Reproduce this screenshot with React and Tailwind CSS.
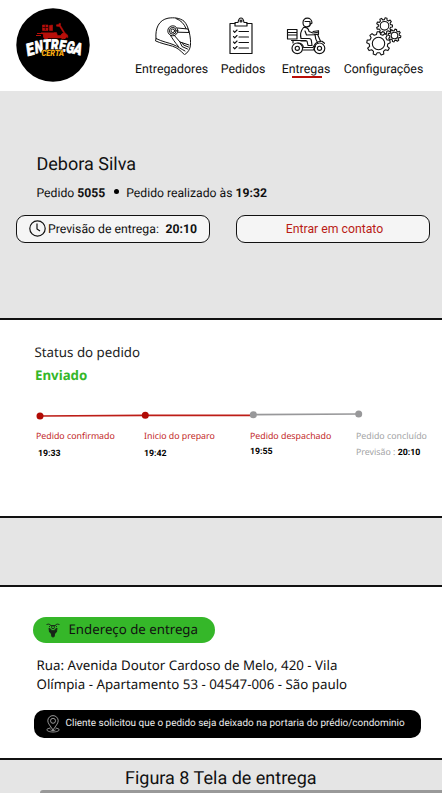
import React from 'react';

const roboto = "font-['Roboto',sans-serif]";
const noto = "font-['Noto_Sans',sans-serif]";

function Logo() {
  return (
    <svg width="76" height="76" viewBox="0 0 76 76" className="block">
      <circle cx="38" cy="38" r="36.7" fill="#000" />
      <g fill="#b80f0a" stroke="#b80f0a" strokeLinejoin="round">
        <path d="M27.500 18h5.500v5.500h-5.500z M34.500 18.500l3-.5v5.500h-3z" strokeWidth=".6" />
        <path d="M26.500 25.500h15l1 3h4l1-2h1.500l-4.500-7-3-.3v-1.500l2.500-.3v-1h1.500v2l4.500 7.500 2.500 2 .5 2.500-3-.5-3 1H31z" strokeWidth=".5" />
        <circle cx="31" cy="29.200" r="2.500" />
        <path d="M22 26.500h6M21 28.500h5" strokeWidth="1" />
        <circle cx="48.500" cy="29.200" r="2.600" />
      </g>
      <path d="M27.500 20.500h5.500M27 25h12M30.300 18v5" stroke="#260000" strokeWidth=".8" />
      <g transform="translate(1.100 .3) scale(.97 1)" fontFamily="Roboto, sans-serif" fontWeight="900" fill="#fff" stroke="#fff" strokeWidth=".7" textAnchor="middle">
        <text transform="translate(15.500 48) rotate(-14) skewX(-6)" fontSize="17" textLength="8" lengthAdjust="spacingAndGlyphs">E</text>
        <text transform="translate(24 45.500) rotate(-10) skewX(-6)" fontSize="17" textLength="8.500" lengthAdjust="spacingAndGlyphs">N</text>
        <text transform="translate(31.700 43.500) rotate(-4) skewX(-6)" fontSize="15.500" textLength="8" lengthAdjust="spacingAndGlyphs">T</text>
        <text transform="translate(39.500 43) skewX(-6)" fontSize="15" textLength="8" lengthAdjust="spacingAndGlyphs">R</text>
        <text transform="translate(47 44) rotate(5) skewX(-6)" fontSize="15.500" textLength="7" lengthAdjust="spacingAndGlyphs">E</text>
        <text transform="translate(54.500 45.500) rotate(9) skewX(-6)" fontSize="16.500" textLength="8" lengthAdjust="spacingAndGlyphs">G</text>
        <text transform="translate(62 47) rotate(14) skewX(-6)" fontSize="16.500" textLength="8.500" lengthAdjust="spacingAndGlyphs">A</text>
      </g>
      <text x="26.500" y="48.800" textLength="22.500" lengthAdjust="spacingAndGlyphs" fontFamily="Roboto, sans-serif" fontSize="8.800" fontWeight="900" fontStyle="italic" fill="#f9ad12" stroke="#000" strokeWidth="1" paintOrder="stroke">CERTA</text>
    </svg>
  );
}

function Helmet() {
  return (
    <svg width="36" height="38" viewBox="0 0 36 38" fill="none" stroke="#111" strokeWidth="1" strokeLinejoin="round" strokeLinecap="round">
      <path d="M1 21.500C0 11 4 3 13 1.200c6-1 12-.2 16 3 5 5 7 17 6.500 24-.5 4-2.500 7.500-6 9.500-4-4-7-7-12-8.500C12 27.500 6 26.500.800 24z" />
      <path d="M1 21.500C8 25 13 25.500 18 27.500c5 2 8 4.500 12 6.500" />
      <path d="M21 1.500c5 2 8 5 10 10M22.500 11l10.500 1 1.200 3.500-11.500-.3M15.500 18.500c2 3 4 6.500 8 11M19 18l6 7 9 3M25 25l2 4.500 5.500 2.500M27.500 26l1 2 5 2" />
      <circle cx="17.800" cy="13.800" r="5" />
      <circle cx="17.800" cy="13.800" r="3.400" />
      <circle cx="17.800" cy="13.800" r="1.800" />
    </svg>
  );
}

function Clipboard() {
  return (
    <svg width="24" height="38" viewBox="0 0 24 38" fill="none" stroke="#111" strokeWidth="1.150" strokeLinejoin="round" strokeLinecap="round">
      <path d="M6 6.500H1v30h22v-30h-5" />
      <path d="M6 9V5.500h3C9.500 2.500 10 1 12 1s2.500 1.500 3 4.500h3V9z" />
      <circle cx="12" cy="4" r="1" />
      {[14, 19.500, 25, 30.500].map((y) => (
        <path key={y} d={`M4.500 ${y}l1.200 1.300L8 ${y - 1}M10 ${y + 0.500}h9.500`} />
      ))}
    </svg>
  );
}

function Scooter() {
  return (
    <svg width="40" height="38" viewBox="0 0 40 38" fill="none" stroke="#111" strokeWidth="1.150" strokeLinejoin="round" strokeLinecap="round">
      <path d="M1.500 12.500h9.500v9.500H1.500zM1.500 15.500h9.500M1.500 18h9.500" />
      <path d="M17 6c-.5-6.500 9-6.500 9 0l-2 1.500V4.500h-5M17 6c.3 5 6.500 5 7.500 1" />
      <path d="M17.500 10.500c-2.500 3-3.500 7-2.500 11h8c2 0 2.500 1 2.500 3l.5 4h-4l-1-4.500h-6M17.500 10.500c3-.5 5 1 5.500 4l4 1.500 5-.7M19 14l1.500 4 9-.3" />
      <path d="M27 14.500l5.500-.8v3.600h-4M29 17.500c0 4 1 6 3 9M31.500 17.300l3 7" />
      <path d="M5.500 23.500h14.500M7 23.500v2.500M12 26c3 0 5 2 5.500 4.500H27c1.500-4 4-6.500 9-6.200l2.500 2M17.500 33h10l2-4" />
      <circle cx="11.300" cy="31.300" r="5.300" /><circle cx="11.300" cy="31.300" r="2.100" />
      <circle cx="33.500" cy="31.300" r="5.300" /><circle cx="33.500" cy="31.300" r="2.100" />
    </svg>
  );
}

function gearPath(cx, cy, outer, inner, teeth, phase = 0) {
  const points = [];
  for (let i = 0; i < teeth; i += 1) {
    [[-0.310, inner], [-0.170, outer], [0.170, outer], [0.310, inner]].forEach(([offset, radius]) => {
      const angle = ((i + offset) / teeth) * Math.PI * 2 + phase;
      points.push(`${(cx + Math.sin(angle) * radius).toFixed(2)} ${(cy - Math.cos(angle) * radius).toFixed(2)}`);
    });
  }
  return `M${points.join('L')}Z`;
}

function Gears() {
  return (
    <svg width="36" height="39" viewBox="0 0 36 39" fill="none" stroke="#111" strokeWidth="1.100" strokeLinejoin="round">
      <path d={gearPath(12.500, 26.500, 11.800, 9.300, 9)} /><circle cx="12.500" cy="26.500" r="6.200" />
      <path d={gearPath(18.500, 8.800, 8, 6.200, 9, 0.200)} /><circle cx="18.500" cy="8.800" r="4.300" />
      <path d={gearPath(28.500, 18.500, 6.400, 4.900, 8, 0.200)} /><circle cx="28.500" cy="18.500" r="3.300" />
    </svg>
  );
}

function Header() {
  return (
    <header className="flex h-[91px] shrink-0 bg-white pl-[15px] pt-[7px]">
      <Logo />
      <nav className="ml-[44px] mt-[10px] flex h-[72px] text-[12.35px] leading-[16px] text-[#111]">
        <div className="flex w-[73px] flex-col items-center whitespace-nowrap"><div className="h-[45px] pl-[3px]"><Helmet /></div>Entregadores</div>
        <div className="ml-[13px] flex w-[44px] flex-col items-center whitespace-nowrap"><div className="h-[45px] pr-[5px]"><Clipboard /></div>Pedidos</div>
        <div className="ml-[17px] flex w-[48px] flex-col items-center whitespace-nowrap"><div className="h-[45px]"><Scooter /></div>Entregas<div className="-mt-[2px] ml-[2px] h-[2px] w-[30px] bg-[#b90d08]" /></div>
        <div className="ml-[14px] flex w-[79px] flex-col items-center whitespace-nowrap"><div className="h-[45px] pl-px"><Gears /></div>Configurações</div>
      </nav>
    </header>
  );
}

function OrderSummary() {
  return (
    <section className="h-[227px] shrink-0 pt-[63px] text-[#111]">
      <h1 className="pl-[36.500px] text-[18px] leading-[22px]">Debora Silva</h1>
      <div className="mt-[8px] flex h-[18px] items-center whitespace-nowrap pl-[36.500px] text-[12.2px]">
        <span>Pedido <b>5055</b></span>
        <span className="mb-[4px] ml-[9px] size-[5px] rounded-full bg-black" />
        <span className="ml-[7px]">Pedido realizado às <b>19:32</b></span>
      </div>
      <div className="mt-[13px] flex gap-[26px] pl-[16px] text-[12.25px]">
        <div className="flex h-[28px] w-[194px] items-center whitespace-nowrap rounded-[9px] border border-[#111] bg-[#f5f5f5] pl-[12px]">
          <svg width="17" height="17" viewBox="0 0 17 17" fill="none" stroke="#111" strokeWidth="1.200" className="-mt-[2px]"><circle cx="8.500" cy="8.500" r="7.700" /><path d="M8 3.500v5.500l3 2" /></svg>
          <span className="ml-[2px]">Previsão de entrega:</span><b className="ml-[6.500px]">20:10</b>
        </div>
        <button className="h-[28px] w-[194px] rounded-[9px] border border-[#111] bg-[#f5f5f5] pl-[3px] text-[#b91c16]">Entrar em contato</button>
      </div>
    </section>
  );
}

function OrderStatus() {
  return (
    <section className={`${noto} h-[200px] shrink-0 border-y-2 border-[#111] bg-white pt-[22px]`}>
      <h2 className="pl-[34.500px] text-[13.3px] leading-[20px] text-[#222]">Status do pedido</h2>
      <p className="mt-[4px] pl-[35px] text-[13.3px] font-bold leading-[18px] text-[#35b729]">Enviado</p>
      <svg width="442" height="12" viewBox="0 0 442 12" className="mt-[24px] block">
        <path d="M40 8L145 7.300H253" fill="none" stroke="#bd1d17" strokeWidth="1.700" />
        <path d="M253 6.700L359 6" stroke="#98989a" strokeWidth="1.700" />
        <circle cx="40" cy="8" r="3.500" fill="#b10b05" /><circle cx="145.300" cy="7.200" r="3.500" fill="#b10b05" />
        <circle cx="253.300" cy="6.700" r="3.500" fill="#98989a" /><circle cx="358.700" cy="6" r="3.500" fill="#98989a" />
      </svg>
      <div className="mt-[9px] flex whitespace-nowrap pl-[36px] text-[8.8px] leading-[14px] text-[#c1251e]">
        <div className="w-[108px]">Pedido confirmado<b className={`${roboto} ml-[2px] mt-[4px] block text-black`}>19:33</b></div>
        <div className="w-[106px]">Inicio do preparo<b className={`${roboto} mt-[4px] block text-black`}>19:42</b></div>
        <div className="w-[106px]">Pedido despachado<b className={`${roboto} mt-[2px] block text-black`}>19:55</b></div>
        <div className="text-[#a2a3a4]">Pedido concluído<div className="mt-[2px]">Previsão : <b className={`${roboto} text-black`}>20:10</b></div></div>
      </div>
    </section>
  );
}

function FrontMotorcycle() {
  return (
    <svg width="14" height="15" viewBox="0 0 14 15" fill="none" stroke="#172517" strokeWidth=".9">
      <path d="M.5 1.500L3 1l2 1.500h4L11 1l2.500.5M4.500 2.500L3 4M9.500 2.500L11 4" />
      <circle cx="7" cy="4.200" r="1.500" />
      <path d="M3 5l2.300 1.800v3.700L3.500 9zM11 5L8.700 6.800v3.700L10.500 9z" fill="#172517" />
      <rect x="5.500" y="7.500" width="3" height="6.500" rx="1.400" fill="#172517" />
    </svg>
  );
}

function DeliveryAddress() {
  return (
    <section className="h-[175px] shrink-0 border-y-2 border-[#111] bg-white pt-[30px]">
      <div className={`${noto} ml-[33px] flex h-[26px] w-[182px] items-center whitespace-nowrap rounded-full bg-[#35b729] pl-[13px] text-[13.25px] text-[#111]`}>
        <FrontMotorcycle /><span className="ml-[8.500px]">Endereço de entrega</span>
      </div>
      <p className={`${noto} mt-[13px] whitespace-nowrap pl-[36.500px] text-[13.3px] leading-[18.5px] text-[#111]`}>Rua: Avenida Doutor Cardoso de Melo, 420 - Vila<br />Olímpia - Apartamento 53 - 04547-006 - São paulo</p>
      <div className="ml-[34px] mt-[17px] flex h-[28px] w-[387px] items-center whitespace-nowrap rounded-[10px] bg-black pl-[12px] text-[9.95px] text-[#eee]">
        <svg width="14" height="18" viewBox="0 0 14 18" fill="none" stroke="#bbb" strokeWidth=".8"><path d="M7 15C4.500 11 1.800 8.500 1.800 5.800a5.200 5.200 0 0110.400 0C12.200 8.500 9.500 11 7 15z" /><circle cx="7" cy="5.800" r="2.500" /><path d="M4.500 13C-2 14 1 17 7 17s9-3 2.500-4M4.500 14.800c1 1 4 1 5 0" /></svg>
        <span className="ml-[5.500px] mt-px">Cliente solicitou que o pedido seja deixado na portaria do prédio/condominio</span>
      </div>
    </section>
  );
}

export default function App() {
  return (
    <main className={`${roboto} flex h-[793px] w-[442px] flex-col overflow-hidden bg-[#e5e5e5] [text-rendering:geometricPrecision]`}>
      <Header />
      <OrderSummary />
      <OrderStatus />
      <div className="h-[67px] shrink-0" />
      <DeliveryAddress />
      <footer className="h-[33px] shrink-0 pt-[8px]">
        <h2 className="ml-[125px] h-[22px] whitespace-nowrap text-[18px] leading-[22px] text-[#111]">Figura 8 Tela de entrega</h2>
        <div className="ml-[40px] h-[3px] rounded-tl-[3px] bg-[#999]" />
      </footer>
    </main>
  );
}
